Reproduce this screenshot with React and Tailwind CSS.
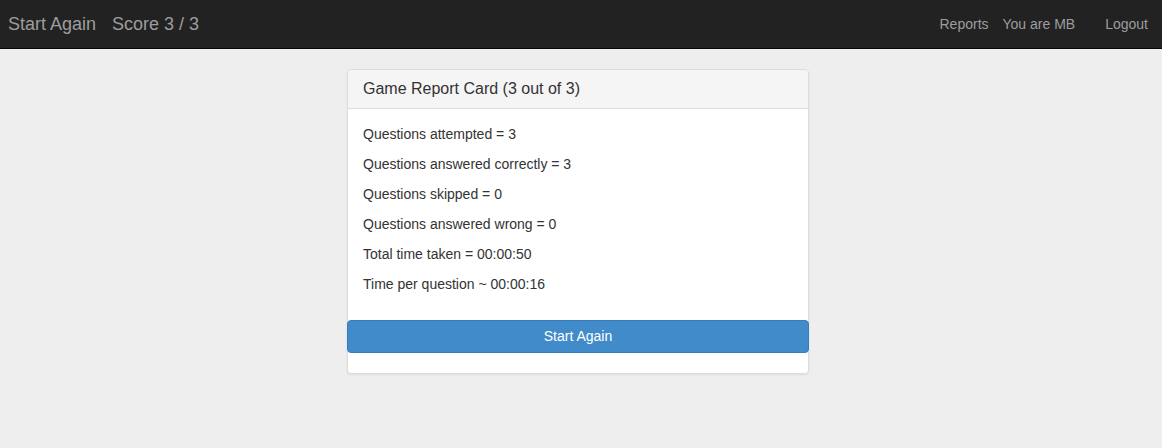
const STATS = [
  'Questions attempted = 3',
  'Questions answered correctly = 3',
  'Questions skipped = 0',
  'Questions answered wrong = 0',
  'Total time taken = 00:00:50',
  'Time per question ~ 00:00:16',
]

export default function App() {
  return (
    <div className="min-h-[448px] bg-[#eeeeee] font-['Liberation_Sans',Arial,sans-serif] text-[14px] text-[#333333]">
      <nav className="flex h-[49px] items-center justify-between border-b border-[#080808] bg-[#222222] text-[#9d9d9d]">
        <div className="flex items-center pl-[8px]">
          <span className="text-[18px]">Start Again</span>
          <span className="ml-[16px] text-[18px]">Score 3 / 3</span>
        </div>
        <div className="flex items-center pr-[14px]">
          <span>Reports</span>
          <span className="ml-[14px]">You are MB</span>
          <span className="ml-[30px]">Logout</span>
        </div>
      </nav>

      <main className="flex justify-center pr-[6px] pt-[20px]">
        <div className="w-[462px] rounded-[4px] border border-[#dddddd] bg-white shadow-[0_1px_2px_rgba(0,0,0,0.08)]">
          <div className="flex h-[39px] items-center rounded-t-[4px] border-b border-[#dddddd] bg-[#f5f5f5] px-[15px] text-[16px]">
            Game Report Card (3 out of 3)
          </div>
          <div className="px-[15px] pt-[15px] pb-[16px]">
            {STATS.map((line) => (
              <p key={line} className="mb-[10px] leading-[20px]">
                {line}
              </p>
            ))}
          </div>
          <button
            type="button"
            className="-mx-px block h-[33px] w-[calc(100%+2px)] rounded-[4px] border border-[#357ebd] bg-[#428bca] text-[14px] text-white"
          >
            Start Again
          </button>
          <div className="h-[20px]" />
        </div>
      </main>
    </div>
  )
}
